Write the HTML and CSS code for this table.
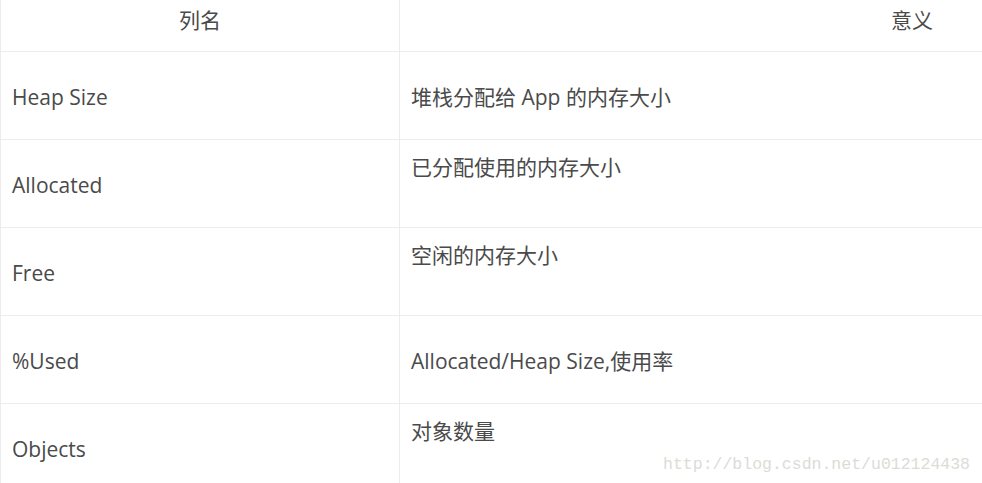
FILE: index.html
```html
<!DOCTYPE html>
<html lang="zh-CN">

<head>
    <meta charset="UTF-8">
    <meta name="viewport" content="width=device-width, initial-scale=1.0">
    <title>Heap 列说明</title>
    <link rel="stylesheet" href="styles.css">
</head>

<body>
    <div class="page">
        <table class="heap-table">
            <thead>
                <tr>
                    <th class="col-name">列名</th>
                    <th class="col-desc">意义</th>
                </tr>
            </thead>
            <tbody>
                <tr>
                    <td>Heap Size</td>
                    <td>堆栈分配给 App 的内存大小</td>
                </tr>
                <tr>
                    <td>Allocated</td>
                    <td class="top">已分配使用的内存大小</td>
                </tr>
                <tr>
                    <td>Free</td>
                    <td class="top">空闲的内存大小</td>
                </tr>
                <tr>
                    <td>%Used</td>
                    <td>Allocated/Heap Size,使用率</td>
                </tr>
                <tr>
                    <td>Objects</td>
                    <td class="top">对象数量</td>
                </tr>
            </tbody>
        </table>

        <!-- watermark over the image -->
        <div class="watermark">http://blog.csdn.net/u012124438</div>
    </div>
</body>

</html>
```

FILE: styles.css
```css
/* General Reset */
* {
    margin: 0;
    padding: 0;
    box-sizing: border-box;
}

body {
    background: #fff;
    color: #4a4a4a;
    font-family: "Open Sans", "Noto Sans CJK SC", sans-serif;
    overflow: hidden;
}

.page {
    position: relative;
    width: 982px;
    height: 483px;
    overflow: hidden;
}

/* Table */
.heap-table {
    width: 1424px;
    border-collapse: collapse;
    font-size: 21px;
}

.heap-table th {
    height: 51px;
    padding-bottom: 12px;
    font-weight: normal;
    text-align: center;
    vertical-align: middle;
    border-left: 1px solid #ececec;
    border-bottom: 1px solid #ececec;
}

.heap-table .col-name {
    width: 399px;
}

.heap-table td {
    height: 88px;
    padding: 3px 11px 0;
    vertical-align: middle;
    border-left: 1px solid #ececec;
    border-bottom: 1px solid #ececec;
    line-height: 30px;
}

.heap-table td.top {
    vertical-align: top;
    padding-top: 12px;
}

/* Watermark */
.watermark {
    position: absolute;
    right: 12px;
    bottom: 9px;
    font-family: "Liberation Mono", monospace;
    font-size: 16.5px;
    color: #dcdcd6;
}
```
